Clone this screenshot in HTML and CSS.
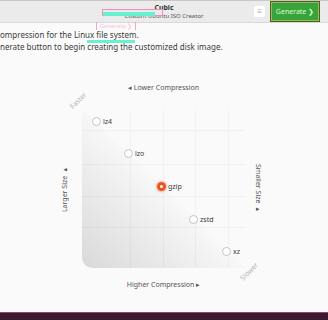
FILE: index.html
```html
<!DOCTYPE html>
<html lang="en">
<head>
    <meta charset="UTF-8">
    <meta name="viewport" content="width=device-width, initial-scale=1.0">
    <title>Cubic</title>
    <link rel="stylesheet" href="styles.css">
</head>
<body>
    <div class="window">
        <header class="header">
            <div class="header-side"></div>
            <div class="title">
                <div class="title-main">Cubic</div>
                <div class="title-sub">Custom Ubuntu ISO Creator</div>
            </div>
            <div class="header-side header-actions">
                <button class="menu-btn">&#8801;</button>
                <button class="generate-btn">Generate &#10095;</button>
            </div>
        </header>

        <main class="content">
            <p class="intro">
                ompression for the Linux file system.<br>
                nerate button to begin creating the customized disk image.
            </p>

            <div class="chart">
                <div class="axis-top">&#9666; Lower Compression</div>
                <div class="axis-left">Larger Size &#9656;</div>
                <div class="plot">
                    <svg class="plot-bg" width="163" height="158" viewBox="0 0 163 158">
                        <defs>
                            <linearGradient id="fade" x1="0" y1="1" x2="1" y2="0">
                                <stop offset="0" stop-color="#d9d9d9"/>
                                <stop offset="0.5" stop-color="#f7f7f7"/>
                                <stop offset="1" stop-color="#fafafa"/>
                            </linearGradient>
                        </defs>
                        <path d="M0 5 Q0 0 4 2 L161 155 Q163 158 159 158 L12 158 Q0 158 0 146 Z" fill="url(#fade)"/>
                        <g stroke="#000" stroke-opacity="0.035" stroke-width="1">
                            <line x1="48.5" y1="0" x2="48.5" y2="158"/>
                            <line x1="81.5" y1="0" x2="81.5" y2="158"/>
                            <line x1="113.5" y1="0" x2="113.5" y2="158"/>
                            <line x1="146.5" y1="0" x2="146.5" y2="158"/>
                            <line x1="0" y1="20.5" x2="163" y2="20.5"/>
                            <line x1="0" y1="54.5" x2="163" y2="54.5"/>
                            <line x1="0" y1="86.5" x2="163" y2="86.5"/>
                            <line x1="0" y1="117.5" x2="163" y2="117.5"/>
                        </g>
                    </svg>
                    <span class="corner corner-fast">Faster</span>
                    <span class="corner corner-slow">Slower</span>
                    <label class="point" style="left: 10px; top: 7px;"><span class="dot"></span>lz4</label>
                    <label class="point" style="left: 42px; top: 39px;"><span class="dot"></span>lzo</label>
                    <label class="point" style="left: 75px; top: 72px;"><span class="dot dot-on"></span>gzip</label>
                    <label class="point" style="left: 107px; top: 105px;"><span class="dot"></span>zstd</label>
                    <label class="point" style="left: 140px; top: 137px;"><span class="dot"></span>xz</label>
                </div>
                <div class="axis-right">Smaller Size &#9656;</div>
                <div class="axis-bottom">Higher Compression &#9656;</div>
            </div>
        </main>

        <footer class="desktop"></footer>

        <!-- screen capture glitches -->
        <span class="glitch glitch-box"></span>
        <span class="glitch glitch-fill"></span>
        <span class="glitch glitch-ghost">Generate &#10095;</span>
        <span class="glitch glitch-bar"></span>
    </div>
</body>
</html>
```

FILE: styles.css
```css
body {
    margin: 0;
    font-family: "Noto Sans", "Open Sans", sans-serif;
    background-color: #fafafa;
    color: #3c3c3c;
}
.window {
    position: relative;
    width: 328px;
    height: 320px;
    display: flex;
    flex-direction: column;
    overflow: hidden;
}
.header {
    height: 21px;
    flex: none;
    display: grid;
    grid-template-columns: 1fr auto 1fr;
    align-items: center;
    background-color: #ebebeb;
    border-top: 1px solid #c8c8c8;
    border-bottom: 1px solid #d8d8d8;
}
.title {
    text-align: center;
    line-height: 8px;
}
.title-main {
    font-size: 7px;
    font-weight: bold;
    color: #333;
}
.title-sub {
    font-size: 6px;
    color: #555;
}
.header-actions {
    display: flex;
    justify-content: flex-end;
    align-items: center;
    gap: 5px;
    padding-right: 8px;
}
.menu-btn {
    width: 11px;
    height: 11px;
    padding: 0;
    border: none;
    border-radius: 2px;
    background-color: #fff;
    color: #aaa;
    font-size: 8px;
    line-height: 11px;
}
.generate-btn {
    height: 21px;
    width: 50px;
    padding: 0;
    border: 1px solid #56591c;
    background-color: #38a33a;
    box-shadow: inset 0 0 0 1px #8fbf5a;
    color: #d9ffd2;
    font-family: inherit;
    font-size: 7px;
}
.content {
    flex: 1;
}
.intro {
    margin: 0;
    padding-top: 6px;
    font-size: 8px;
    line-height: 12px;
    white-space: nowrap;
}
.chart {
    margin-top: 29px;
    display: grid;
    grid-template-columns: 82px 163px 1fr;
    grid-template-rows: 28px 158px auto;
    font-size: 7px;
    color: #555;
}
.axis-top {
    grid-column: 2;
    grid-row: 1;
    text-align: center;
    line-height: 10px;
    padding-top: 1px;
}
.axis-left {
    grid-column: 1;
    grid-row: 2;
    justify-self: end;
    align-self: center;
    margin-right: 12px;
    writing-mode: vertical-rl;
    transform: rotate(180deg);
    line-height: 10px;
}
.axis-right {
    grid-column: 3;
    grid-row: 2;
    justify-self: start;
    align-self: center;
    margin-left: 8px;
    writing-mode: vertical-rl;
    line-height: 10px;
}
.axis-bottom {
    grid-column: 2;
    grid-row: 3;
    text-align: center;
    line-height: 10px;
    padding-top: 12px;
}
.plot {
    grid-column: 2;
    grid-row: 2;
    position: relative;
}
.plot-bg {
    display: block;
}
.corner {
    position: absolute;
    font-size: 7px;
    color: #b4b4b4;
    transform: rotate(-45deg);
}
.corner-fast {
    left: -14px;
    top: -14px;
}
.corner-slow {
    left: 156px;
    top: 157px;
}
.point {
    position: absolute;
    display: flex;
    align-items: center;
    gap: 2px;
    font-size: 7px;
    line-height: 9px;
    color: #3a3a3a;
}
.dot {
    width: 7px;
    height: 7px;
    border-radius: 50%;
    border: 1px solid #c4c4c4;
    background-color: #fff;
}
.dot-on {
    border-color: #e95420;
    background-color: #e95420;
    box-shadow: 0 0 2px 1px rgba(233, 84, 32, 0.4);
    position: relative;
}
.dot-on::after {
    content: "";
    position: absolute;
    left: 2px;
    top: 2px;
    width: 3px;
    height: 3px;
    border-radius: 50%;
    background-color: #fff;
}
.desktop {
    height: 7px;
    flex: none;
    background-color: #3b1a31;
    border-top: 1px solid #8d4a6c;
}
.glitch {
    position: absolute;
}
.glitch-box {
    left: 102px;
    top: 9px;
    width: 59px;
    height: 5px;
    border: 1px solid #f48ac6;
}
.glitch-fill {
    left: 103px;
    top: 12px;
    width: 52px;
    height: 4px;
    background-color: #6af0cf;
}
.glitch-ghost {
    left: 96px;
    top: 22px;
    width: 38px;
    height: 8px;
    border-left: 1px solid #f4a0d0;
    border-right: 1px solid #f4a0d0;
    font-size: 6px;
    line-height: 8px;
    text-align: center;
    color: #f6c6e2;
}
.glitch-bar {
    left: 87px;
    top: 40px;
    width: 48px;
    height: 3px;
    background-color: #6af0cf;
}
```
